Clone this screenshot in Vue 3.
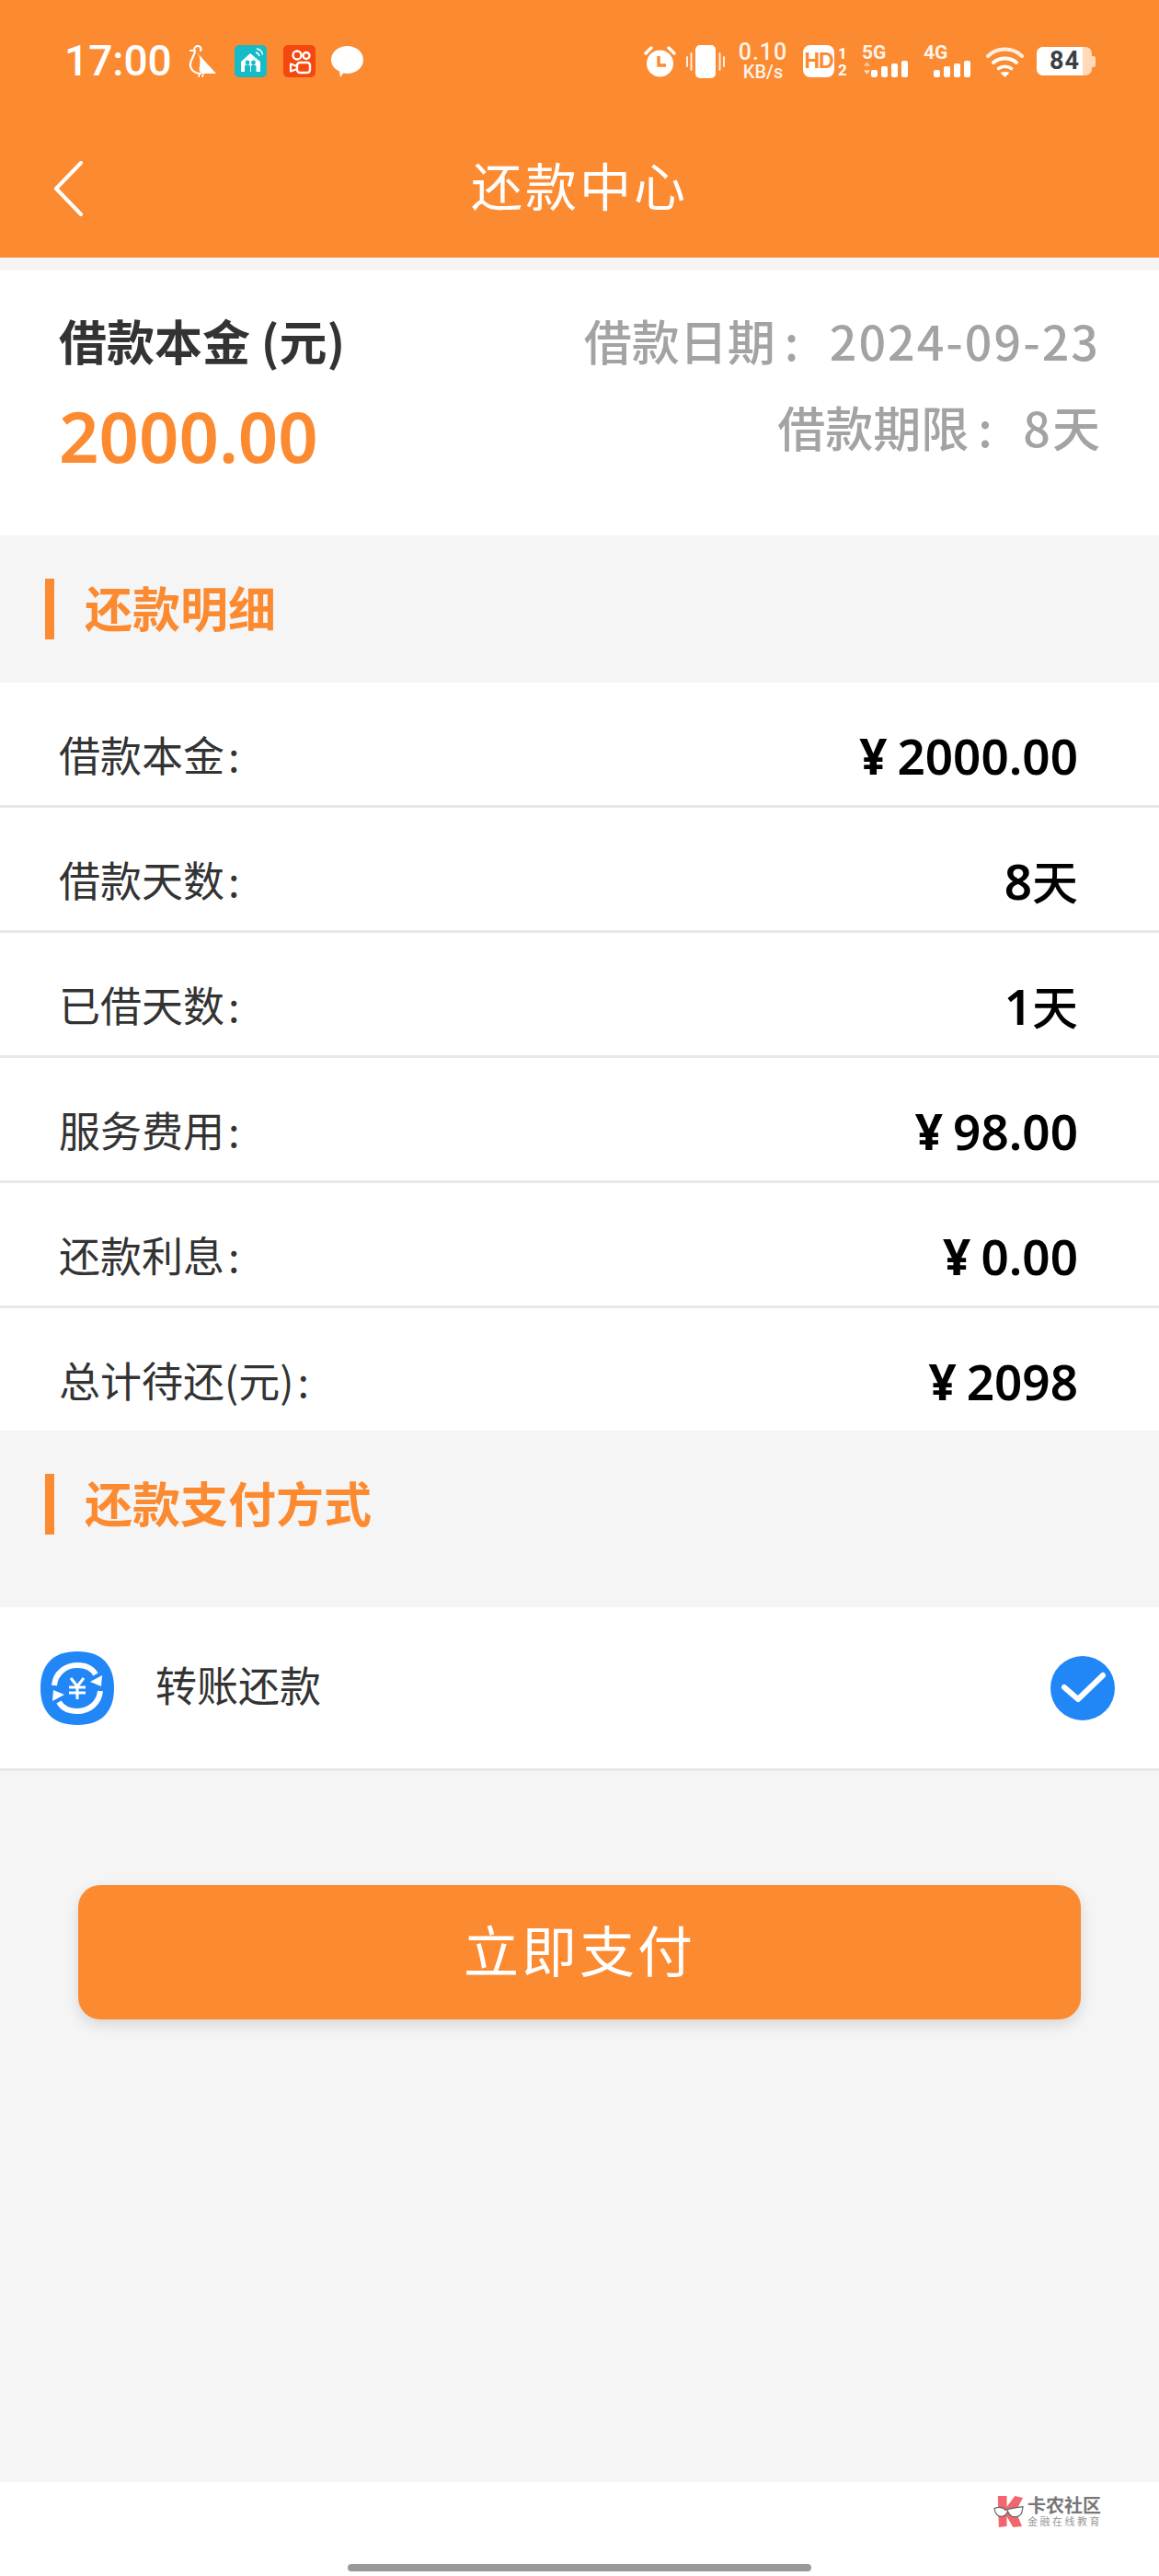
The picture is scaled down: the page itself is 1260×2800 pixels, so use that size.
<template>
  <div class="page">
    <!-- Orange header with status bar -->
    <header class="top">
      <div class="status">
        <div class="status-left">
          <span class="time">17:00</span>
          <svg class="ic-bird" viewBox="0 0 30 35">
            <path d="M9 8L30 31H15c-3-1-4-4-3-8 1-5 1-10-3-15z" fill="#fff" />
            <path d="M2 6h4c0-3 2-5 4-5 3 0 4 3 3 5M7 6c0 6-6 10-5 17 1 5 6 8 11 8" fill="none" stroke="#fff" stroke-width="2.200" stroke-linecap="round" />
            <path d="M12 31l-1 4M16 31l-1 4" stroke="#fff" stroke-width="1.600" fill="none" />
          </svg>
          <svg class="ic-app ic-home" viewBox="0 0 35 35">
            <rect width="35" height="35" rx="5" fill="#16bbc8" />
            <path d="M17 9L7 18v11h21V18z" fill="#fff" />
            <circle cx="14" cy="19" r="2.400" fill="#16bbc8" /><circle cx="20.500" cy="19" r="2.400" fill="#16bbc8" />
            <path d="M11 29v-6c0-1 1-1.500 3-1.500s3 .5 3 1.500v6zM18 29v-6c0-1 1-1.500 2.500-1.500s3 .5 3 1.500v6z" fill="#16bbc8" />
            <path d="M23 8c2 .5 3.500 2 4 4M24 4c3.500.5 6 3 6.500 6.500" stroke="#fff" stroke-width="1.300" fill="none" />
          </svg>
          <svg class="ic-app ic-video" viewBox="0 0 35 35">
            <rect width="35" height="35" rx="5" fill="#f5480f" />
            <circle cx="15" cy="11" r="4.500" fill="none" stroke="#fff" stroke-width="2.400" />
            <circle cx="25" cy="11.500" r="3.500" fill="none" stroke="#fff" stroke-width="2.400" />
            <rect x="15" y="19" width="14" height="11" rx="3" fill="none" stroke="#fff" stroke-width="2.400" />
            <path d="M15 23l-7-2.500v8l7-2.500" fill="none" stroke="#fff" stroke-width="2.200" stroke-linejoin="round" />
          </svg>
          <svg class="ic-msg" viewBox="0 0 35 34">
            <path d="M17.500 0C27 0 35 6.500 35 15S27 30 17.500 30c-1.500 0-3-.2-4.300-.5L10 34l-1-6.500C3.500 25 0 20.500 0 15 0 6.500 8 0 17.500 0z" fill="#fff" />
          </svg>
        </div>
        <div class="status-right">
          <svg class="ic-alarm" viewBox="0 0 35 35">
            <path d="M2 9l6-6M33 9l-6-6" stroke="#fff" stroke-width="3.400" stroke-linecap="round" />
            <circle cx="17.500" cy="20" r="14.500" fill="#fff" />
            <path d="M16 12v10h8" stroke="#fc8a31" stroke-width="3.400" fill="none" />
          </svg>
          <svg class="ic-vib" viewBox="0 0 42 36">
            <rect x="10" y="0" width="22" height="36" rx="5" fill="#fff" />
            <path d="M5.500 9v18M1 13v10M36.500 9v18M41 13v10" stroke="#fff" stroke-width="2" stroke-linecap="round" opacity="0.85" />
          </svg>
          <div class="speed"><span class="speed-num">0.10</span><span class="speed-unit">KB/s</span></div>
          <div class="hd">
            <span class="hd-badge">HD</span>
            <span class="hd-nums"><i>1</i><i>2</i></span>
          </div>
          <div class="net">
            <span class="net-label">5G</span>
            <svg class="net-arrows" viewBox="0 0 10 15">
              <path d="M5 0l4 5H1z" fill="#ffc79b" /><path d="M5 15l4-5H1z" fill="#ffe3cd" />
            </svg>
            <span class="bars"><b class="b1"></b><b class="b2"></b><b class="b3"></b><b class="b4"></b></span>
          </div>
          <div class="net net-4g">
            <span class="net-label">4G</span>
            <span class="bars"><b class="b1"></b><b class="b2"></b><b class="b3"></b><b class="b4"></b></span>
          </div>
          <svg class="ic-wifi" viewBox="0 0 41 34">
            <path d="M2 11C12 1 29 1 39 11" stroke="#ffeede" stroke-width="4" fill="none" stroke-linecap="round" />
            <path d="M8 18c7-6 18-6 25 0" stroke="#fff" stroke-width="4" fill="none" stroke-linecap="round" />
            <path d="M13.500 24.500c4-3 10-3 14 0" stroke="#fff" stroke-width="3.600" fill="none" stroke-linecap="round" />
            <path d="M15.500 29c3-1.500 7-1.500 10 0l-5 5z" fill="#fff" />
          </svg>
          <div class="battery">
            <div class="battery-body"><span class="battery-fill"></span><span class="battery-num">84</span></div>
            <div class="battery-cap"></div>
          </div>
        </div>
      </div>
      <div class="navbar">
        <svg class="back" viewBox="0 0 35 60">
          <path d="M31 2L4 30l27 28" stroke="#fff" stroke-width="4" fill="none" stroke-linecap="round" stroke-linejoin="round" />
        </svg>
        <h1 class="nav-title">还款中心</h1>
      </div>
    </header>

    <!-- Summary card -->
    <section class="summary">
      <div>
        <div class="summary-label">借款本金 (元)</div>
        <div class="summary-amount">2000.00</div>
      </div>
      <div class="summary-side">
        <div>借款日期<span class="side-colon">:</span><span class="side-num">2024-09-23</span></div>
        <div class="side-term">借款期限<span class="side-colon">:</span><span class="side-num">8</span>天</div>
      </div>
    </section>

    <div class="section-head">
      <span class="section-mark"></span>
      <span class="section-title">还款明细</span>
    </div>

    <ul class="detail">
      <li v-for="row in rows" :key="row.label" class="detail-row">
        <span class="detail-label">{{ row.label }}<span class="detail-colon">:</span></span>
        <span class="detail-value">
          <span v-if="row.yen" class="yen">¥</span>{{ row.value }}<span v-if="row.unit" class="unit">{{ row.unit }}</span>
        </span>
      </li>
    </ul>

    <div class="section-head section-head-pay">
      <span class="section-mark"></span>
      <span class="section-title">还款支付方式</span>
    </div>

    <div class="pay-row">
      <svg class="pay-icon" viewBox="0 0 80 80">
        <path d="M40 0C66 0 80 14 80 40S66 80 40 80 0 66 0 40 14 0 40 0z" fill="#2187f7" />
        <path d="M15 37C16 24 27 15 40 15c9 0 16 3 20 10" stroke="#fff" stroke-width="6" fill="none" />
        <path d="M65 43C64 56 53 65 40 65c-9 0-16-3-20-10" stroke="#fff" stroke-width="6" fill="none" />
        <path d="M54 33l12 5 1-12zM26 47l-12-5-1 12z" fill="#fff" />
        <path d="M33 29l7 9 7-9M31 39h18M31 45h18M40 38v14" stroke="#fff" stroke-width="3" fill="none" />
      </svg>
      <span class="pay-name">转账还款</span>
      <svg class="pay-check" viewBox="0 0 70 70">
        <circle cx="35" cy="35" r="35" fill="#2187f7" />
        <path d="M15 34l15 13 27-26" stroke="#fff" stroke-width="6" fill="none" stroke-linecap="round" stroke-linejoin="round" />
      </svg>
    </div>

    <div class="action">
      <button class="pay-btn">立即支付</button>
    </div>

    <footer class="foot">
      <div class="brand">
        <svg class="brand-logo" viewBox="0 0 34 36">
          <path d="M5 1h10v12L24 1l9 2-8 15 7 17-10 1-7-12v11L6 36z" fill="#f2666f" />
          <path d="M1 15c5-2 10-1 13 2 3-2 11-3 19-4l-1 6c-1 5-7 6-11 5-3-1-4-4-5-6-1 3-3 6-7 6-4 0-7-3-8-9z" fill="#fff" stroke="#666" stroke-width="1.200" />
        </svg>
        <div class="brand-text">
          <div class="brand-name">卡农社区</div>
          <div class="brand-sub">金融在线教育</div>
        </div>
      </div>
      <div class="home-bar"></div>
    </footer>
  </div>
</template>

<script setup>
const rows = [
  { label: '借款本金', value: '2000.00', yen: true },
  { label: '借款天数', value: '8', unit: '天' },
  { label: '已借天数', value: '1', unit: '天' },
  { label: '服务费用', value: '98.00', yen: true },
  { label: '还款利息', value: '0.00', yen: true },
  { label: '总计待还(元)', value: '2098', yen: true }
]
</script>

<style>
html, body { margin: 0; background: #f5f5f5; }
</style>

<style scoped>
.page { width: 1260px; height: 2800px; display: flex; flex-direction: column; background: #f5f5f5; font-family: "Noto Sans CJK SC", "Noto Sans", sans-serif; overflow: hidden; }

.top { height: 280px; background: #fc8a31; color: #fff; flex: none; }
.status { height: 134px; box-sizing: border-box; padding: 49px 69px 0 70px; display: flex; justify-content: space-between; align-items: flex-start; }
.status-left, .status-right { display: flex; align-items: center; height: 35px; }
.time { font: 500 46px/35px Roboto, sans-serif; width: 135px; }
.ic-bird { width: 30px; height: 35px; }
.ic-app { width: 35px; height: 35px; }
.ic-home { margin-left: 20px; }
.ic-video { margin-left: 18px; }
.ic-msg { width: 35px; height: 34px; margin-left: 17px; }
.ic-alarm { width: 35px; height: 35px; }
.ic-vib { width: 42px; height: 36px; margin-left: 11px; }
.speed { display: flex; flex-direction: column; margin-left: 16px; width: 51px; font-family: Roboto, sans-serif; font-weight: 500; align-items: center; }
.speed-num { font-size: 25px; line-height: 22px; letter-spacing: 1px; color: #fff3e8; }
.speed-unit { font-size: 20px; line-height: 18px; margin-top: 1px; color: #fff3e8; }
.hd { display: flex; margin-left: 18px; align-items: center; }
.hd-badge { width: 34px; height: 35px; background: #fff; border-radius: 8px; color: #fc8a31; font: 700 23px/35px "Liberation Sans", sans-serif; text-align: center; letter-spacing: -1px; }
.hd-nums { display: flex; flex-direction: column; width: 12px; margin-left: 3px; text-align: center; font: 700 17px/18px Roboto, sans-serif; }
.hd-nums i { font-style: normal; }
.net { position: relative; width: 50px; height: 35px; margin-left: 15px; }
.net-4g { margin-left: 17px; width: 51px; }
.net-label { position: absolute; left: 0; top: 0; font: 700 21px/16px Roboto, sans-serif; color: #fff3e8; }
.net-arrows { position: absolute; left: 1px; top: 18px; width: 9px; height: 14px; }
.bars { position: absolute; right: 0; bottom: 0; display: flex; align-items: flex-end; gap: 4px; }
.bars b { display: block; width: 7px; background: #fff; border-radius: 2px; }
.b1 { height: 8px; }
.b2 { height: 12px; }
.b3 { height: 15px; }
.b4 { height: 18px; }
.ic-wifi { width: 41px; height: 34px; margin-left: 17px; }
.battery { display: flex; align-items: center; margin-left: 14px; }
.battery-body { position: relative; width: 60px; height: 31px; background: #ffd9b8; border-radius: 7px; overflow: hidden; }
.battery-fill { position: absolute; left: 0; top: 0; bottom: 0; width: 84%; background: #fff; }
.battery-num { position: absolute; left: 14px; top: 0; color: #3a3f47; font: 700 27px/31px Roboto, sans-serif; letter-spacing: 1px; }
.battery-cap { width: 4px; height: 12px; background: #ffd9b8; border-radius: 0 2px 2px 0; }

.navbar { height: 146px; position: relative; display: flex; align-items: flex-start; justify-content: center; }
.back { position: absolute; left: 57px; top: 41px; width: 35px; height: 60px; }
.nav-title { margin: 0; padding-top: 33px; font-size: 56px; line-height: 66px; font-weight: 400; letter-spacing: 3px; color: #fff; }

.summary { margin-top: 14px; height: 288px; flex: none; background: #fff; box-sizing: border-box; padding: 43px 64px 0 64px; display: flex; justify-content: space-between; }
.summary-label { font-size: 52px; line-height: 66px; font-weight: 700; color: #333; }
.summary-amount { margin-top: 26px; font: 600 76px/90px "Noto Sans", sans-serif; color: #fc8a31; }
.summary-side { text-align: right; font-size: 52px; line-height: 66px; font-weight: 500; color: #a3a3a3; }
.side-colon { display: inline-block; width: 49px; margin-left: 10px; text-align: left; }
.side-num { letter-spacing: 2px; }
.side-term { margin-top: 28px; }

.section-head { height: 160px; flex: none; display: flex; align-items: center; box-sizing: border-box; padding-left: 49px; }
.section-head-pay { height: 192px; padding-bottom: 56px; padding-top: 24px; }
.section-mark { width: 10px; height: 66px; background: #fc8a31; }
.section-title { margin: 0 0 5px 33px; font-size: 52px; line-height: 66px; font-weight: 700; color: #fc8a31; }
.section-head-pay .section-mark { margin-bottom: -2px; position: relative; top: -1px; }

.detail { list-style: none; margin: 0; padding: 0; background: #fff; flex: none; }
.detail-row { height: 136px; box-sizing: border-box; padding: 22px 88px 0 64px; display: flex; justify-content: space-between; align-items: center; border-bottom: 3px solid #e8e8e8; }
.detail-row:last-child { border-bottom: 0; height: 133px; }
.detail-label { font-size: 45px; color: #333; }
.detail-colon { margin-left: 4px; }
.detail-value { padding-top: 3px; font-size: 53px; font-weight: 600; color: #000; font-family: "Noto Sans", "Noto Sans CJK SC", sans-serif; }
.yen { font-weight: 700; margin-right: 11px; }
.unit { font-size: 50px; font-weight: 500; }

.pay-row { height: 178px; flex: none; box-sizing: border-box; background: #fff; border-bottom: 3px solid #e8e8e8; display: flex; align-items: center; padding: 0 48px 0 44px; }
.pay-icon { width: 80px; height: 80px; }
.pay-name { margin: 0 0 8px 45px; font-size: 45px; color: #333; }
.pay-check { margin-left: auto; width: 70px; height: 70px; }

.action { flex: 1; padding: 124px 85px 0; }
.pay-btn { display: block; width: 100%; height: 146px; border: 0; border-radius: 24px; padding: 0 0 10px; background: #fc8a31; color: #fff; font-family: inherit; font-size: 60px; letter-spacing: 3px; box-shadow: 0 6px 16px rgba(0, 0, 0, 0.12); }

.foot { height: 102px; flex: none; background: #fff; position: relative; }
.brand { position: absolute; left: 1080px; top: 14px; display: flex; align-items: center; }
.brand-logo { width: 33px; height: 35px; }
.brand-text { margin-left: 4px; color: #777; }
.brand-name { font-size: 20px; line-height: 20px; font-weight: 700; white-space: nowrap; }
.brand-sub { font-size: 11px; line-height: 14px; color: #999; letter-spacing: 2.500px; white-space: nowrap; }
.home-bar { position: absolute; left: 378px; bottom: 5px; width: 504px; height: 8px; background: #999; border-radius: 4px; }
</style>
